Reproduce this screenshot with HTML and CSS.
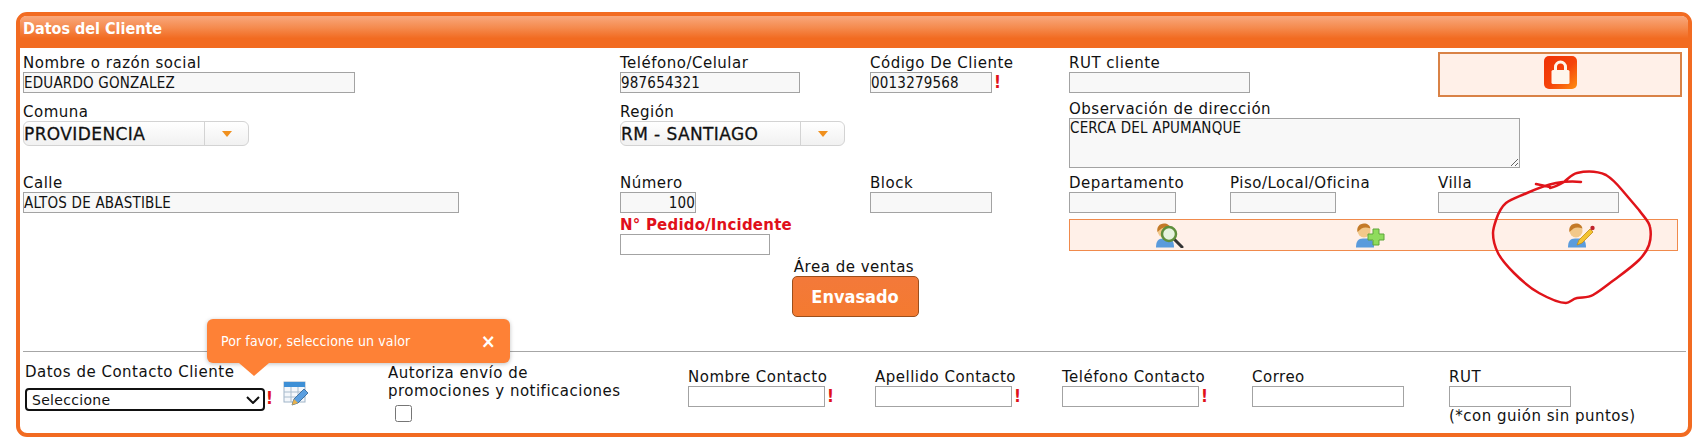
FILE: index.html
```html
<!DOCTYPE html>
<html lang="es">
<head>
    <meta charset="UTF-8">
    <title>Datos del Cliente</title>
    <link rel="stylesheet" href="styles.css">
</head>
<body>
    <div class="panel">
        <div class="panel-title">Datos del Cliente</div>

        <div class="client-grid">
            <div class="field pad-2">
                <label>Nombre o razón social</label>
                <input class="w-332" type="text" value="EDUARDO GONZALEZ">
            </div>
            <div class="field pad-2">
                <label>Teléfono/Celular</label>
                <input class="w-180" type="text" value="987654321">
            </div>
            <div class="field pad-2">
                <label>Código De Cliente</label>
                <div class="with-mark">
                    <input class="w-122" type="text" value="0013279568"><span class="mark">!</span>
                </div>
            </div>
            <div class="field pad-2 span-2">
                <label>RUT cliente</label>
                <input class="w-181" type="text">
            </div>
            <div class="lock-box">
                <svg class="lock-icon" width="33" height="33" viewBox="0 0 33 33">
                    <defs>
                        <linearGradient id="lockbg" x1="0" y1="0" x2="1" y2="1">
                            <stop offset="0" stop-color="#ef3206"/>
                            <stop offset="0.55" stop-color="#f5440a"/>
                            <stop offset="1" stop-color="#ff9012"/>
                        </linearGradient>
                    </defs>
                    <rect width="33" height="33" rx="5" fill="url(#lockbg)"/>
                    <path d="M11.500 15v-4a5 5 0 0 1 10 0V15" fill="none" stroke="#fff6ec" stroke-width="3"/>
                    <rect x="7.500" y="14" width="18" height="14" rx="1.500" fill="#fff6ec"/>
                </svg>
            </div>

            <div class="field pad-3">
                <label>Comuna</label>
                <div class="combo w-226">
                    <span class="combo-value">PROVIDENCIA</span>
                    <span class="combo-btn"><i class="caret"></i></span>
                </div>
            </div>
            <div class="field pad-3 span-2">
                <label>Región</label>
                <div class="combo w-225">
                    <span class="combo-value">RM - SANTIAGO</span>
                    <span class="combo-btn"><i class="caret"></i></span>
                </div>
            </div>
            <div class="field span-3">
                <label>Observación de dirección</label>
                <textarea class="obs">CERCA DEL APUMANQUE</textarea>
            </div>

            <div class="field pad-3">
                <label>Calle</label>
                <input class="w-436" type="text" value="ALTOS DE ABASTIBLE">
            </div>
            <div class="field pad-3">
                <label>Número</label>
                <input class="w-76 num" type="text" value="100">
            </div>
            <div class="field pad-3">
                <label>Block</label>
                <input class="w-122" type="text">
            </div>
            <div class="field pad-3">
                <label>Departamento</label>
                <input class="w-107" type="text">
            </div>
            <div class="field pad-3">
                <label>Piso/Local/Oficina</label>
                <input class="w-106" type="text">
            </div>
            <div class="field pad-3">
                <label>Villa</label>
                <input class="w-181" type="text">
            </div>

            <div class="field spacer-cell"></div>
            <div class="field span-2">
                <label class="label-red">N° Pedido/Incidente</label>
                <input class="w-150 plain" type="text">
            </div>
            <div class="icon-bar span-3">
                <span class="icon-cell">
                    <svg width="30" height="25" viewBox="0 0 30 25">
                        <path d="M1 24.500c0-6 2-9 7-9h5c4 0 6 3 6 9z" fill="#5a9bdc"/>
                        <circle cx="9" cy="8" r="6.500" fill="#f2c88a"/>
                        <path d="M2.500 9c-1-5 2-8.500 6.500-8.500 3.500 0 6 2 6.500 5-4-1.500-7-1-9 0-1 1-2.500 2-4 3.500z" fill="#c47a28"/>
                        <path d="M19 16l8 8" stroke="#333" stroke-width="3" stroke-linecap="round"/>
                        <circle cx="14" cy="11" r="7" fill="#e6f3df" stroke="#5f8f3c" stroke-width="2.500"/>
                    </svg>
                </span>
                <span class="icon-cell">
                    <svg width="30" height="25" viewBox="0 0 30 25">
                        <path d="M1 24.500c0-6 2-9 7-9h5c4 0 6 3 6 9z" fill="#5a9bdc"/>
                        <circle cx="9" cy="8" r="6.500" fill="#f2c88a"/>
                        <path d="M2.500 9c-1-5 2-8.500 6.500-8.500 3.500 0 6 2 6.500 5-4-1.500-7-1-9 0-1 1-2.500 2-4 3.500z" fill="#c47a28"/>
                        <path d="M18 6h6v5h5v6h-5v5h-6v-5h-5v-6h5z" fill="#8fdc5c" stroke="#5fa53a" stroke-width="1"/>
                    </svg>
                </span>
                <span class="icon-cell icon-last">
                    <svg width="30" height="25" viewBox="0 0 30 25">
                        <path d="M1 24.500c0-6 2-9 7-9h5c4 0 6 3 6 9z" fill="#5a9bdc"/>
                        <circle cx="9" cy="8" r="6.500" fill="#f2c88a"/>
                        <path d="M2.500 9c-1-5 2-8.500 6.500-8.500 3.500 0 6 2 6.500 5-4-1.500-7-1-9 0-1 1-2.500 2-4 3.500z" fill="#c47a28"/>
                        <path d="M10 22l2-5L23 6l3 3-11 11z" fill="#f4c430" stroke="#c08a18" stroke-width="0.800"/>
                        <circle cx="25.500" cy="5" r="2.200" fill="#c0232b"/>
                    </svg>
                </span>
            </div>
        </div>

        <div class="sales-area">
            <label>Área de ventas</label>
            <button class="sales-btn" type="button">Envasado</button>
        </div>

        <hr class="divider">

        <div class="contact-grid">
            <div class="field contact-select">
                <div class="tooltip">
                    <span>Por favor, seleccione un valor</span>
                    <b class="tooltip-close">×</b>
                </div>
                <label>Datos de Contacto Cliente</label>
                <div class="with-mark">
                    <select class="select-focus"><option>Seleccione</option></select><span class="mark">!</span>
                    <svg class="table-icon" width="26" height="25" viewBox="0 0 26 25">
                        <rect x="1" y="1" width="21" height="20" fill="#f4f7fb" stroke="#9fb4c8"/>
                        <rect x="1" y="1" width="21" height="5" fill="#3d8fd6"/>
                        <path d="M1 11h21M1 16h21M8 6v15M15 6v15" stroke="#a9bccd" fill="none"/>
                        <path d="M9 24l2-6L21 8l4 4-10 10z" fill="#5b9fe0" stroke="#2f5f8f" stroke-width="0.800"/>
                        <path d="M9 24l2-6 4 4z" fill="#e8b04a"/>
                    </svg>
                </div>
            </div>
            <div class="field contact-consent">
                <label>Autoriza envío de<br>promociones y notificaciones</label>
                <input class="consent-check" type="checkbox">
            </div>
            <div class="field contact-field">
                <label>Nombre Contacto</label>
                <div class="with-mark"><input class="w-137 plain" type="text"><span class="mark">!</span></div>
            </div>
            <div class="field contact-field">
                <label>Apellido Contacto</label>
                <div class="with-mark"><input class="w-137 plain" type="text"><span class="mark">!</span></div>
            </div>
            <div class="field contact-field">
                <label>Teléfono Contacto</label>
                <div class="with-mark"><input class="w-137 plain" type="text"><span class="mark">!</span></div>
            </div>
            <div class="field contact-field">
                <label>Correo</label>
                <input class="w-152 plain" type="text">
            </div>
            <div class="field contact-field">
                <label>RUT</label>
                <input class="w-122 plain" type="text">
                <span class="hint">(*con guión sin puntos)</span>
            </div>
        </div>
    </div>

    <!-- marca a mano sobre la captura -->
    <svg class="scribble" width="1700" height="448" viewBox="0 0 1700 448">
        <path d="M1536 184L1550 187M1581 182C1570 181 1562 182 1556 183C1546 185 1536 189 1527 193C1518 197 1511 199 1506 203C1500 208 1498 214 1496 220C1494 226 1493 229 1493 233C1493 240 1495 247 1498 253C1502 261 1508 267 1514 273C1522 281 1530 288 1539 293C1548 298 1558 303 1566 303C1570 303 1572 299 1577 298C1583 297 1588 298 1593 295C1600 291 1607 285 1614 280C1622 274 1632 267 1639 260C1644 255 1647 251 1649 245C1651 239 1651 232 1650 227C1649 221 1643 216 1639 210C1633 203 1628 197 1622 190C1617 184 1611 178 1606 175C1597 171 1586 171 1577 173C1572 174 1569 178 1564 182C1559 185 1555 187 1550 188" fill="none" stroke="#e0141a" stroke-width="2.500" stroke-linecap="round" stroke-linejoin="round"/>
    </svg>
</body>
</html>
```

FILE: styles.css
```css
* {
    box-sizing: border-box;
}

body {
    margin: 12px 8px 0 16px;
    background: #fff;
    color: #111;
    font-family: "DejaVu Sans", sans-serif;
    font-size: 15px;
    letter-spacing: 0.5px;
}

.panel {
    border: 4px solid #f26b21;
    border-radius: 11px;
    height: 425px;
    background: #fff;
}

.panel-title {
    height: 32px;
    padding: 3px 3px 0;
    color: #fff;
    font-family: "DejaVu Sans Condensed", "DejaVu Sans", sans-serif;
    font-weight: bold;
    font-size: 16px;
    line-height: 19px;
    letter-spacing: 0;
    background: linear-gradient(#f9a87c 0, #f58c50 35%, #f26b21 70%);
    border-radius: 6px 6px 0 0;
}

label {
    display: block;
    height: 18px;
    line-height: 18px;
    white-space: nowrap;
}

.label-red {
    color: #e0101a;
    font-weight: bold;
    letter-spacing: 0.2px;
}

/* Grilla principal */
.client-grid {
    display: grid;
    grid-template-columns: 597px 250px 199px 161px 208px 1fr;
    row-gap: 3px;
    padding: 4px 0 0 3px;
}

.field {
    min-width: 0;
}

.pad-2 {
    padding-top: 2px;
}

.pad-3 {
    padding-top: 3px;
}

.span-2 {
    grid-column: span 2;
}

.span-3 {
    grid-column: span 3;
}

input[type="text"],
textarea {
    display: block;
    height: 21px;
    padding: 0;
    border: 1px solid #a3a3a3;
    background: #f8f8f8;
    color: #111;
    border-radius: 0;
    font-family: "DejaVu Sans Condensed", "DejaVu Sans", sans-serif;
    font-size: 15px;
    letter-spacing: 0.2px;
    outline: none;
}

input.plain {
    background: #fff;
}

.num {
    text-align: right;
}

.w-76 { width: 76px; }
.w-106 { width: 106px; }
.w-107 { width: 107px; }
.w-122 { width: 122px; }
.w-137 { width: 137px; }
.w-150 { width: 150px; }
.w-152 { width: 152px; }
.w-180 { width: 180px; }
.w-181 { width: 181px; }
.w-225 { width: 225px; }
.w-226 { width: 226px; }
.w-332 { width: 332px; }
.w-436 { width: 436px; }

textarea.obs {
    width: 451px;
    height: 50px;
    line-height: 18px;
}

.with-mark {
    display: flex;
    align-items: flex-start;
}

.mark {
    margin-left: 2px;
    color: #e0101a;
    font-family: "DejaVu Sans Condensed", "DejaVu Sans", sans-serif;
    font-weight: bold;
    font-size: 17px;
    line-height: 20px;
    letter-spacing: 0;
}

/* Combo */
.combo {
    display: flex;
    height: 25px;
    border: 1px solid #d3d3d3;
    border-radius: 6px;
    background: linear-gradient(#fff, #f1f1f1);
}

.combo-value {
    flex: 1;
    font-size: 17px;
    line-height: 24px;
    color: #111;
    letter-spacing: 0.4px;
    -webkit-text-stroke: 0.3px #111;
}

.combo-btn {
    width: 44px;
    border-left: 1px solid #d3d3d3;
    display: flex;
    align-items: center;
    justify-content: center;
}

.caret {
    width: 0;
    height: 0;
    border-left: 5px solid transparent;
    border-right: 5px solid transparent;
    border-top: 6px solid #f0901e;
}

/* Cajas naranjas */
.lock-box {
    height: 45px;
    width: 244px;
    padding-top: 2px;
    background: #fff0e8;
    border: 2px solid #d98246;
    display: flex;
    justify-content: center;
    align-items: flex-start;
}

.icon-bar {
    margin-top: 3px;
    height: 32px;
    width: 609px;
    background: #fff0e8;
    border: 1px solid #f08a4c;
    display: grid;
    grid-template-columns: 200px 200px 1fr;
    align-items: center;
    justify-items: center;
}

.icon-cell {
    display: flex;
}

.icon-last {
    margin-left: 17px;
}

/* Area de ventas */
.sales-area {
    display: flex;
    flex-direction: column;
    align-items: center;
    margin-top: 3px;
}

.sales-btn {
    width: 127px;
    height: 41px;
    margin-left: 2px;
    border: 1px solid #9c4f1c;
    border-radius: 5px;
    background: linear-gradient(#f3793a, #f47a30);
    color: #fff;
    font-family: "DejaVu Sans Condensed", "DejaVu Sans", sans-serif;
    font-size: 18px;
    font-weight: bold;
}

.divider {
    margin: 34px 2px 0 3px;
    border: 0;
    border-top: 1px solid #a6a6a6;
}

/* Contacto */
.contact-grid {
    display: grid;
    grid-template-columns: 363px 300px 187px 187px 190px 197px 1fr;
    padding-left: 5px;
}

.contact-select {
    position: relative;
    padding-top: 11px;
}

.contact-select label {
    height: 25px;
}

.select-focus {
    appearance: none;
    width: 240px;
    height: 23px;
    padding: 0 2px 0 5px;
    border: 2.500px solid #111;
    border-radius: 4px;
    background: #fff url("data:image/svg+xml,%3Csvg xmlns='http://www.w3.org/2000/svg' width='14' height='8'%3E%3Cpath d='M1 1l6 6 6-6' fill='none' stroke='%23111' stroke-width='2'/%3E%3C/svg%3E") no-repeat right 3px center;
    color: #111;
    font-family: "DejaVu Sans", sans-serif;
    font-size: 14px;
    letter-spacing: 0.3px;
}

.contact-select .mark {
    margin-left: 1px;
}

.table-icon {
    margin: -7px 0 0 10px;
}

.contact-consent {
    padding-top: 12px;
}

.contact-consent label {
    height: 36px;
    margin-bottom: 5px;
}

.consent-check {
    display: block;
    width: 17px;
    height: 17px;
    margin: 0 0 0 7px;
}

.contact-field {
    padding-top: 16px;
}

.hint {
    display: block;
    line-height: 18px;
}

.tooltip {
    position: absolute;
    left: 182px;
    top: -33px;
    width: 303px;
    height: 44px;
    padding: 0 14px;
    display: flex;
    align-items: center;
    justify-content: space-between;
    background: #fe8136;
    border-radius: 6px;
    box-shadow: 0 1px 4px rgba(0, 0, 0, 0.25);
    color: #fff;
    font-family: "DejaVu Sans Condensed", "DejaVu Sans", sans-serif;
    font-size: 14px;
    letter-spacing: 0.1px;
}

.tooltip:after {
    content: '';
    position: absolute;
    left: 32px;
    top: 44px;
    border-left: 15px solid transparent;
    border-right: 15px solid transparent;
    border-top: 13px solid #fe8136;
}

.tooltip-close {
    font-size: 20px;
    line-height: 20px;
}

.scribble {
    position: absolute;
    left: 0;
    top: 0;
    pointer-events: none;
}
```
